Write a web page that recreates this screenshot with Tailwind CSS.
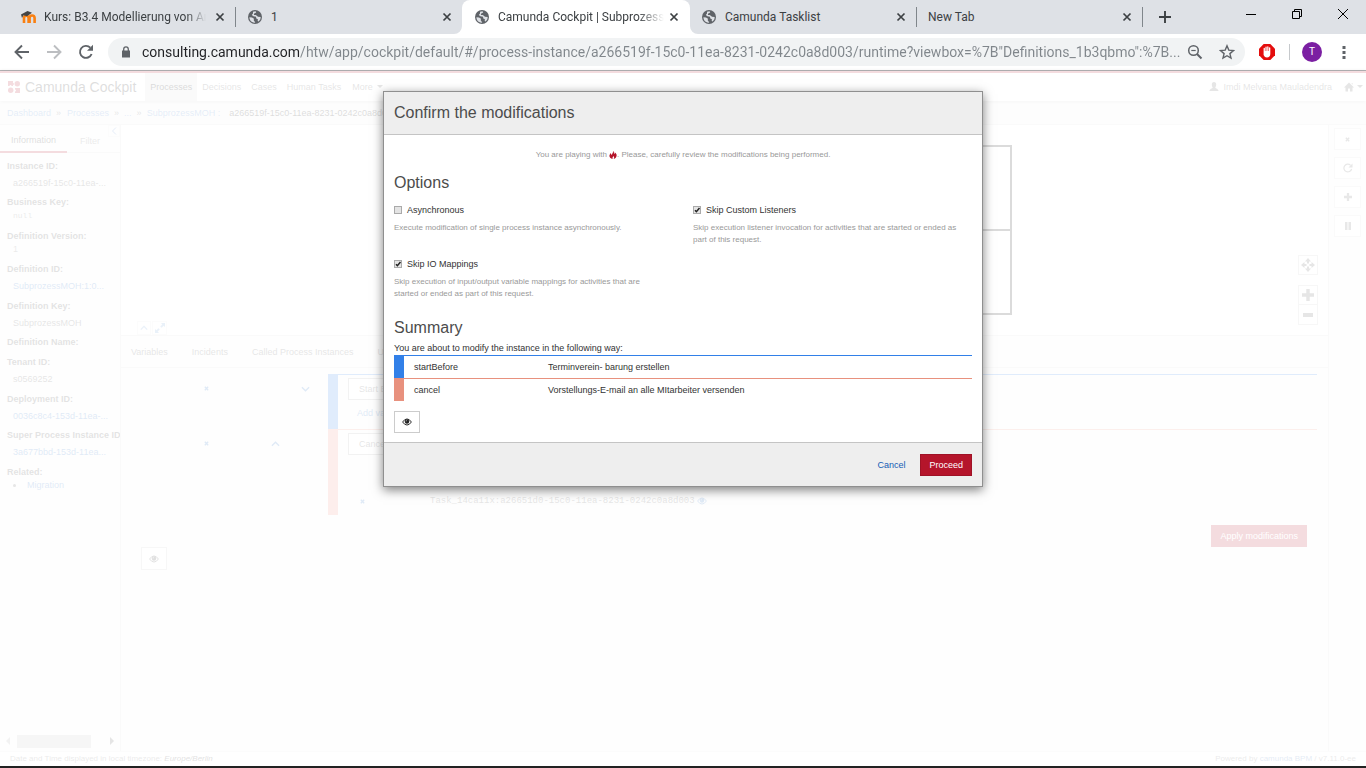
<!DOCTYPE html>
<html lang="en">
<head>
<meta charset="utf-8">
<meta name="viewport" content="width=device-width, initial-scale=1">
<title>Camunda Cockpit | Subprozess</title>
<script src="https://cdn.jsdelivr.net/npm/@tailwindcss/browser@4"></script>
</head>
<body class="flex h-screen flex-col overflow-hidden bg-white font-['Liberation_Sans',Arial,sans-serif] text-[9px] leading-[14px] text-[#333]">

<svg class="hidden" aria-hidden="true">
  <symbol id="globe" viewBox="0 0 14 14"><circle cx="7" cy="7" r="7" fill="#5f6368"/><path d="M1.4 7.2 4 7.4l2 1.4-.3 1.4 1.6 2.3-1.2.2A5.700 5.700 0 0 1 1.400 7.200ZM5 1.800 7.600 1.300l.6 1.200-2 1-.4 1.400 2 .2 2.200 1.600 2.700.300-.3 2.200-1.700 2.200-1-.3.2-1.900-1.600-.8L8 6.700 5.400 6.200 3.800 5 5 3.600Z" fill="#dee1e6"/></symbol>
  <symbol id="close" viewBox="0 0 12 12"><path d="m2.500 2.500 7 7m0-7-7 7" stroke="currentColor" stroke-width="1.700" fill="none"/></symbol>
  <symbol id="eye" viewBox="0 0 12 10"><path d="M.5 5Q3 1.200 6 1.200T11.500 5Q9 8.800 6 8.800T.5 5Z" fill="none" stroke="currentColor" stroke-width="1.200"/><circle cx="6" cy="4.400" r="2.800" fill="currentColor"/><path d="M4.900 4.200a1.200 1.200 0 0 1 1-1.200" stroke="#fff" stroke-width=".7" fill="none"/></symbol>
  <symbol id="remove" viewBox="0 0 6 6"><path d="m1 1 4 4m0-4L1 5" stroke="currentColor" stroke-width="1.600" fill="none"/></symbol>
  <symbol id="up" viewBox="0 0 10 6"><path d="m1 5 4-4 4 4" stroke="currentColor" stroke-width="1.400" fill="none"/></symbol>
  <symbol id="plus" viewBox="0 0 12 12"><path d="M4.300 0h3.400v4.300H12v3.400H7.700V12H4.300V7.700H0V4.300h4.300z" fill="currentColor"/></symbol>
</svg>

<!-- Browser window -->
<header class="shrink-0 font-[Roboto,'Noto_Sans',sans-serif]">
  <div class="flex h-[34px] bg-[#dee1e6] pl-2 text-xs text-[#3c4043]">
    <div class="flex min-w-0 flex-[0_1_227px] items-center pl-[13px] pr-[9px]">
      <svg class="mr-[7px] h-3.5 w-4 shrink-0" viewBox="0 0 16 14"><path d="M3 13V8a2.300 2.300 0 0 1 4.600 0v5M8.600 13V8a2.500 2.500 0 0 1 5 0v5" fill="none" stroke="#f98012" stroke-width="2.600"/><path d="M0 4.500 6.500 1 11 2.800 6 6.200 2.500 5.300 1 8Z" fill="#444"/></svg>
      <span class="min-w-0 flex-1 overflow-hidden whitespace-nowrap [mask-image:linear-gradient(90deg,#000_88%,transparent)]">Kurs: B3.4 Modellierung von An</span>
      <button class="ml-2 h-3 w-3 shrink-0" aria-label="Close tab"><svg class="h-3 w-3"><use href="#close"/></svg></button>
    </div>
    <div class="my-[7px] w-px shrink-0 bg-[#80868b]"></div>
    <div class="flex min-w-0 flex-[0_1_226px] items-center pl-3 pr-[9px]">
      <svg class="mr-[9px] h-3.5 w-3.5 shrink-0"><use href="#globe"/></svg>
      <span class="min-w-0 flex-1">1</span>
      <button class="ml-2 h-3 w-3 shrink-0" aria-label="Close tab"><svg class="h-3 w-3"><use href="#close"/></svg></button>
    </div>
    <div class="relative flex min-w-0 flex-[0_1_228px] items-center rounded-t-lg bg-white pl-[13px] pr-[10px]">
      <svg class="absolute bottom-0 -left-2 h-2 w-2" viewBox="0 0 8 8"><path d="M8 0v8H0a8 8 0 0 0 8-8" fill="#fff"/></svg>
      <svg class="absolute bottom-0 -right-2 h-2 w-2" viewBox="0 0 8 8"><path d="M0 0v8h8a8 8 0 0 1-8-8" fill="#fff"/></svg>
      <svg class="mr-[9px] h-3.5 w-3.5 shrink-0"><use href="#globe"/></svg>
      <span class="min-w-0 flex-1 overflow-hidden whitespace-nowrap [mask-image:linear-gradient(90deg,#000_84%,transparent)]">Camunda Cockpit | Subprozess</span>
      <button class="ml-1 h-3 w-3 shrink-0" aria-label="Close tab"><svg class="h-3 w-3"><use href="#close"/></svg></button>
    </div>
    <div class="flex min-w-0 flex-[0_1_226px] items-center pl-3 pr-[9px]">
      <svg class="mr-[9px] h-3.5 w-3.5 shrink-0"><use href="#globe"/></svg>
      <span class="min-w-0 flex-1">Camunda Tasklist</span>
      <button class="ml-2 h-3 w-3 shrink-0" aria-label="Close tab"><svg class="h-3 w-3"><use href="#close"/></svg></button>
    </div>
    <div class="my-[7px] w-px shrink-0 bg-[#80868b]"></div>
    <div class="flex min-w-0 flex-[0_1_225px] items-center pl-[11px] pr-[9px]">
      <span class="min-w-0 flex-1">New Tab</span>
      <button class="ml-2 h-3 w-3 shrink-0" aria-label="Close tab"><svg class="h-3 w-3"><use href="#close"/></svg></button>
    </div>
    <div class="my-[7px] w-px shrink-0 bg-[#80868b]"></div>
    <button class="ml-4 self-center" aria-label="New tab"><svg class="h-3 w-3" viewBox="0 0 12 12"><path d="M6 0v12M0 6h12" stroke="#3c4043" stroke-width="1.900"/></svg></button>
    <div class="ml-auto flex h-7 items-center gap-9 pr-[18px] text-black">
      <button aria-label="Minimize"><svg class="h-2.5 w-2.5" viewBox="0 0 10 10"><path d="M0 5.500h10" stroke="currentColor"/></svg></button>
      <button aria-label="Restore"><svg class="h-2.5 w-2.5" viewBox="0 0 10 10"><path d="M.5 2.500h7v7h-7zM2.500 2V.5h7v7H8" fill="none" stroke="currentColor"/></svg></button>
      <button aria-label="Close"><svg class="h-2.5 w-2.5" viewBox="0 0 10 10"><path d="m0 0 10 10M10 0 0 10" fill="none" stroke="currentColor"/></svg></button>
    </div>
  </div>
  <div class="flex h-9 items-center bg-white pr-3.5 pl-3.5 text-[#5f6368]">
    <button class="mr-4" aria-label="Back"><svg class="h-4 w-4" viewBox="0 0 16 16"><path d="M15 8H2M8 1.500 1.500 8 8 14.500" fill="none" stroke="currentColor" stroke-width="1.900"/></svg></button>
    <button class="mr-4 text-[#bcbec1]" aria-label="Forward"><svg class="h-4 w-4" viewBox="0 0 16 16"><path d="M1 8h13M8 1.500 14.500 8 8 14.500" fill="none" stroke="currentColor" stroke-width="1.900"/></svg></button>
    <button class="mr-3.5" aria-label="Reload"><svg class="h-4 w-4" viewBox="0 0 16 16"><path d="M13.600 10a6 6 0 1 1-1.300-6.300" fill="none" stroke="currentColor" stroke-width="1.900"/><path d="M15 .8v6H9z" fill="currentColor"/></svg></button>
    <div class="flex h-7 min-w-0 flex-1 items-center rounded-full bg-[#f1f3f4] pr-2.5 pl-3.5">
      <svg class="mr-3 h-3 w-2 shrink-0" viewBox="0 0 8 12"><path d="M0 4.500h8V11.500H0z" fill="currentColor"/><path d="M1.700 5V3.200a2.300 2.300 0 0 1 4.600 0V5" fill="none" stroke="currentColor" stroke-width="1.300"/></svg>
      <input aria-label="Address" readonly value='consulting.camunda.com/htw/app/cockpit/default/#/process-instance/a266519f-15c0-11ea-8231-0242c0a8d003/runtime?viewbox=%7B"Definitions_1b3qbmo":%7B...' class="min-w-0 flex-1 bg-[linear-gradient(90deg,#202124_157px,#80868b_157px)] bg-clip-text text-sm text-transparent outline-none">
      <button class="mr-4 ml-1" aria-label="Zoom"><svg class="h-4 w-4" viewBox="0 0 16 16"><circle cx="6.500" cy="6.500" r="4.800" fill="none" stroke="currentColor" stroke-width="1.500"/><path d="m10 10 4.500 4.500" stroke="currentColor" stroke-width="2"/><path d="M4.300 6.500h4.400" stroke="currentColor" stroke-width="1.200"/></svg></button>
      <button aria-label="Bookmark"><svg class="h-4 w-4" viewBox="0 0 16 16"><path d="m8 1.800 1.800 4.300 4.700.4-3.600 3.100 1.100 4.500L8 11.700l-4 2.400 1.100-4.500-3.600-3.100 4.700-.4z" fill="none" stroke="currentColor" stroke-width="1.400"/></svg></button>
    </div>
    <button class="ml-3.5" aria-label="Ad blocker"><svg class="h-4 w-4" viewBox="0 0 16 16"><path d="M4.700 0h6.600L16 4.700v6.600L11.300 16H4.700L0 11.300V4.700z" fill="#e40d0d"/><path d="M4.600 9V4.500a.65.65 0 0 1 1.300 0V7h.5V3.200a.65.65 0 0 1 1.300 0V7h.5V2.900a.65.65 0 0 1 1.300 0V7h.5V4a.65.65 0 0 1 1.300 0v6c0 2.200-1.300 3.500-3.300 3.500-1.800 0-2.500-.8-3.400-2.500z" fill="#fff"/></svg></button>
    <div class="ml-3.5 h-4 w-px bg-[#c6c9cc]"></div>
    <button class="ml-3 flex h-5 w-5 items-center justify-center rounded-full bg-[#7b1fa2] text-[10px] text-white">T</button>
    <button class="ml-3.5 flex w-4 justify-center" aria-label="Menu"><svg class="h-4 w-1" viewBox="0 0 4 16"><path d="M.5 2h3v3h-3zM.5 7h3v3h-3zM.5 12h3v3h-3z" fill="currentColor"/></svg></button>
  </div>
  <div class="h-px bg-[#b5b5b7]"></div>
</header>

<div class="relative flex min-h-0 flex-1 flex-col">
  <!-- Cockpit -->
  <nav class="z-0 flex h-[30px] shrink-0 items-center border-t-2 border-[#b5152b] bg-white pl-2 text-[#555] shadow-[0_1px_4px_#0003]">
    <a href="#" class="flex items-center gap-[5px] text-sm text-[#222]">
      <svg class="h-3 w-3 text-[#b5152b]" viewBox="0 0 12 12" fill="currentColor"><path d="M0 0h5v2a1 1 0 0 1 0 2v1H3.500a1 1 0 0 0-2 0H0zM7 7h5v5H7v-1.500a1 1 0 0 0 0-2z"/><circle cx="9.300" cy="2.700" r="2.700"/><circle cx="2.700" cy="9.300" r="2.700"/></svg>
      Camunda Cockpit</a>
    <a href="#" class="ml-[9px] flex h-full items-center bg-[#ddd] px-[5px] text-black">Processes</a>
    <a href="#" class="ml-[5px]">Decisions</a>
    <a href="#" class="ml-2.5">Cases</a>
    <a href="#" class="ml-2.5">Human Tasks</a>
    <button class="ml-[11px] flex items-center gap-1">More <svg class="h-1 w-1.5" viewBox="0 0 6 4"><path d="M0 0h6L3 3z" fill="currentColor"/></svg></button>
    <button class="ml-auto flex items-center gap-1">
      <svg class="h-2.5 w-2.5" viewBox="0 0 10 10" fill="currentColor"><path d="M5 0c1.500 0 2.200 1 2.200 2.500S6.500 5 6.300 5.600C6.500 6.700 9.500 7 9.500 9H.5c0-2 3-2.300 3.200-3.400C3.500 5 2.800 4 2.800 2.500S3.500 0 5 0"/></svg>
      Imdi Melvana Mauladendra</button>
    <button class="mr-[3px] ml-3 flex items-center gap-[3px]" aria-label="Home"><svg class="h-2.5 w-2.5" viewBox="0 0 10 10" fill="currentColor"><path d="m5 .5 5 5H8.500V9.500H6V6.500H4V9.500H1.500V5.500H0zM7.500 1h1v2z"/></svg><svg class="h-1 w-1.5" viewBox="0 0 6 4"><path d="M0 0h6L3 3z" fill="currentColor"/></svg></button>
  </nav>
  <div class="flex h-6 shrink-0 items-center gap-[5px] border-b border-[#ddd] bg-[#f4f4f4] pl-[7px] text-[#555]">
    <a href="#" class="text-[#4d86cc]">Dashboard</a><span>»</span>
    <a href="#" class="ml-px text-[#4d86cc]">Processes</a><span>»</span>
    <a href="#" class="text-[#4d86cc]">...</a><span>»</span>
    <a href="#" class="text-[#4d86cc]">SubprozessMOH :</a>
    <span class="ml-1 text-[#111]">a266519f-15c0-11ea-8231-0242c0a8d003</span>
  </div>
  <div class="flex min-h-0 flex-1 bg-[#f8f8f8]">
    <aside class="flex w-[121px] shrink-0 flex-col border-r border-[#ddd]">
      <div class="relative flex h-7 shrink-0 border-b border-[#ddd] pt-1 text-[#777]">
        <button class="-mb-px w-[67px] border-b-2 border-[#b5152b] text-[#222]">Information</button>
        <button class="w-[46px]">Filter</button>
        <button class="absolute top-0 right-0 flex h-3 w-3 items-center justify-center border border-[#eee]" aria-label="Collapse"><svg class="h-2 w-1.5" viewBox="0 0 6 8"><path d="M5 .5 1.500 4 5 7.500" fill="none" stroke="#4d86cc"/></svg></button>
      </div>
      <dl class="mt-[5px] min-h-0 flex-1 overflow-hidden pl-[7px] leading-[18px] whitespace-nowrap [&_dd]:pl-1.5 [&_dt]:leading-4 [&_dt]:font-bold [&_dt]:text-[#444]">
        <div class="h-9"><dt>Instance ID:</dt><dd class="text-[#555]">a266519f-15c0-11ea-...</dd></div>
        <div class="h-[34px]"><dt>Business Key:</dt><dd class="font-['Liberation_Mono',monospace] text-[8px] leading-3 text-[#777]">null</dd></div>
        <div class="h-[33px]"><dt>Definition Version:</dt><dd class="leading-[10px] text-[#777]">1</dd></div>
        <div class="h-[37px]"><dt>Definition ID:</dt><dd><a href="#" class="text-[#2a70c4]">SubprozessMOH:1:0...</a></dd></div>
        <div class="h-9"><dt>Definition Key:</dt><dd class="text-[#555]">SubprozessMOH</dd></div>
        <div class="h-5"><dt>Definition Name:</dt></div>
        <div class="h-[37px]"><dt>Tenant ID:</dt><dd class="text-[#555]">s0569252</dd></div>
        <div class="h-9"><dt>Deployment ID:</dt><dd><a href="#" class="text-[#2a70c4]">0036c8c4-153d-11ea-...</a></dd></div>
        <div class="h-[37px]"><dt>Super Process Instance ID:</dt><dd><a href="#" class="text-[#2a70c4]">3a677bbd-153d-11ea...</a></dd></div>
        <div><dt>Related:</dt><dd class="flex items-center gap-[11px] leading-[10px]"><span class="h-[3px] w-[3px] rounded-full bg-[#555]"></span><a href="#" class="text-[#2a70c4]">Migration</a></dd></div>
      </dl>
      <div class="flex h-5 shrink-0 items-center bg-[#f5f5f5] px-1.5">
        <svg class="h-2 w-1" viewBox="0 0 4 8"><path d="M4 0v8L0 4z" fill="#aaa"/></svg>
        <div class="ml-[7px] h-[13px] w-[74px] bg-[#c1c1c1]"></div>
        <svg class="ml-auto h-2 w-1" viewBox="0 0 4 8"><path d="M0 0v8l4-4z" fill="#505050"/></svg>
      </div>
    </aside>

    <main class="flex min-w-0 flex-1 flex-col">
      <section class="relative h-[210px] shrink-0 overflow-hidden bg-[#fcfcfc]" aria-label="Diagram">
        <svg class="absolute top-5 left-[300px] h-[170px] w-[591px]" viewBox="0 0 591 170"><path d="M1 1h589v168H1zM1 85h589" fill="none" stroke="#111" stroke-width="2"/></svg>
        <div class="absolute right-2.5 bottom-2.5 flex flex-col text-[#555]">
          <button class="mb-2.5 flex h-5 w-5 items-center justify-center border border-[#ccc] bg-white" aria-label="Reset view"><svg class="h-3.5 w-3.5" viewBox="0 0 14 14" fill="currentColor"><path d="M6 5.500V3.500H4L7 0l3 3.500H8v2zM8.500 6h2V4L14 7l-3.500 3V8h-2zM8 8.500v2h2L7 14l-3-3.500h2v-2zM5.500 8h-2v2L0 7l3.500-3v2h2z"/></svg></button>
          <button class="flex h-5 w-5 items-center justify-center border border-[#ccc] bg-white" aria-label="Zoom in"><svg class="h-3 w-3"><use href="#plus"/></svg></button>
          <button class="flex h-5 w-5 items-center justify-center border border-t-0 border-[#ccc] bg-white" aria-label="Zoom out"><svg class="h-1 w-2.5"><path d="M0 0h10v4H0z" fill="currentColor"/></svg></button>
        </div>
        <div class="absolute bottom-0 left-4 flex text-[#6f9fd8]">
          <button class="flex h-3.5 w-3.5 items-center justify-center border border-[#eee]" aria-label="Collapse diagram"><svg class="h-1.5 w-2"><use href="#up"/></svg></button>
          <button class="ml-px flex h-3.5 w-[15px] items-center justify-center border border-[#eee]" aria-label="Maximize diagram"><svg class="h-2.5 w-2.5" viewBox="0 0 10 10" fill="currentColor"><path d="M6 0h4v4L8.600 2.700 6.600 4.700 5.300 3.400l2-2zM0 6l1.400 1.300 2-2 1.300 1.300-2 2L4 10H0z"/></svg></button>
        </div>
      </section>
      <div class="flex h-[33px] shrink-0 items-center gap-6 border-y border-[#ddd] pl-2.5 text-[#555]">
        <button>Variables</button><button>Incidents</button><button>Called Process Instances</button><button>User Tasks</button>
      </div>
      <div class="mt-1.5 mr-[11px] flex h-[55px] shrink-0 text-[#2a70c4]">
        <div class="flex w-[207px] shrink-0 items-start pt-3 pl-[83px]">
          <button aria-label="Remove"><svg class="h-[5px] w-[5px]"><use href="#remove"/></svg></button>
          <button class="ml-[92px]" aria-label="Move down"><svg class="h-1.5 w-[9px] rotate-180"><use href="#up"/></svg></button>
        </div>
        <div class="w-2.5 shrink-0 bg-[#3280e8]"></div>
        <div class="min-w-0 flex-1 border-t border-[#3280e8] pt-[3px] pl-2.5">
          <select aria-label="Start instruction" class="block h-[22px] w-[110px] appearance-none border border-[#aaa] bg-white pl-2.5 text-[#555]"><option>Start Before</option></select>
          <a href="#" class="mt-1.5 block pl-[9px]">Add variable</a>
        </div>
      </div>
      <div class="mr-[11px] flex h-[86px] shrink-0 text-[#2a70c4]">
        <div class="flex w-[207px] shrink-0 items-start pt-3 pl-[83px]">
          <button aria-label="Remove"><svg class="h-[5px] w-[5px]"><use href="#remove"/></svg></button>
          <button class="ml-[62px]" aria-label="Move up"><svg class="h-1.5 w-[9px]"><use href="#up"/></svg></button>
        </div>
        <div class="w-2.5 shrink-0 bg-[#f09080]"></div>
        <div class="min-w-0 flex-1 border-t border-[#e8917e] pt-[3px] pl-2.5">
          <select aria-label="Cancel instruction" class="block h-[22px] w-[110px] appearance-none border border-[#aaa] bg-white pl-2.5 text-[#555]"><option>Cancel</option></select>
          <div class="mt-[39px] flex items-center pl-3">
            <button aria-label="Remove instance"><svg class="h-[5px] w-[5px]"><use href="#remove"/></svg></button>
            <code class="ml-[65px] font-['Liberation_Mono',monospace] text-[#555]">Task_14ca11x:a26651d0-15c0-11ea-8231-0242c0a8d003</code>
            <svg class="ml-0.5 h-2 w-2.5"><use href="#eye"/></svg>
          </div>
        </div>
      </div>
      <button class="mt-2.5 mr-[21px] h-[22px] self-end bg-[#b5152b] px-[9px] text-white">Apply modifications</button>
      <button class="ml-5 flex h-[23px] w-[26px] items-center justify-center border border-[#ccc] bg-white" aria-label="Show payload"><svg class="h-2 w-2.5"><use href="#eye"/></svg></button>
    </main>

    <div class="flex w-[38px] shrink-0 flex-col gap-[7px] border-l border-[#ddd] pt-[3px] pl-[5px] text-[#666]">
      <button class="flex h-[22px] w-[27px] items-center justify-center border border-[#ddd] bg-white" aria-label="Cancel instance"><svg class="h-[5px] w-[5px]"><use href="#remove"/></svg></button>
      <button class="flex h-[22px] w-[27px] items-center justify-center border border-[#ddd] bg-white" aria-label="Retry"><svg class="h-2.5 w-2.5" viewBox="0 0 10 10"><path d="M8.600 6a3.900 3.900 0 1 1-1-3.700" fill="none" stroke="currentColor" stroke-width="1.200"/><path d="M9.500.5v4h-4z" fill="currentColor"/></svg></button>
      <button class="flex h-[22px] w-[27px] items-center justify-center border border-[#ddd] bg-white" aria-label="Add variable"><svg class="h-2 w-2"><use href="#plus"/></svg></button>
      <button class="flex h-[22px] w-[27px] items-center justify-center border border-[#ddd] bg-white" aria-label="Suspend"><svg class="h-2 w-1.5" viewBox="0 0 6 8"><path d="M0 0h2.500v8H0zM3.500 0H6v8H3.500z" fill="currentColor"/></svg></button>
    </div>
  </div>
  <footer class="flex h-[15px] shrink-0 items-center justify-between border-t border-[#eee] bg-white px-2.5 text-[8px] text-[#777]">
    <span>Date and Time displayed in local timezone: <i class="text-[#333]">Europe/Berlin</i></span>
    <span>Powered by <a href="#" class="text-[#4a78b8]">camunda BPM</a> / v7.11.0-ee</span>
  </footer>

  <!-- Dialog -->
  <div class="absolute inset-0 flex items-start justify-center bg-white/85 pt-5">
    <div role="dialog" aria-labelledby="dialog-title" class="w-[600px] border border-[#8f8f8f] bg-white shadow-[0_3px_10px_#00000080]">
      <h1 id="dialog-title" class="flex h-[43px] items-center border-b border-[#c4c4c4] bg-[#eee] px-2.5 text-base text-[#4c4c4c]">Confirm the modifications</h1>
      <div class="px-2.5 pt-[13px] pb-[9px]">
        <p class="flex items-center justify-center text-[8px] text-[#999]">You are playing with <svg class="ml-0.5 h-2 w-2" viewBox="0 0 8 8"><path d="M4 0c1.500 1 .4 2 1.500 3C6 2.500 5.800 1.800 5.600 1.300 7.500 2.500 8 4 7.500 5.300 7 7 5.500 8 4.500 8c1-1 .8-2-.3-3C4 6 3.300 6.300 3.600 8 1.500 7.600.3 6.300.4 4.800.5 3.500 1.300 2.700 2 2c0 1 .2 1.500.8 1.900C3.200 2.500 4.300 1.700 4 0" fill="#b5152b"/></svg>. Please, carefully review the modifications being performed.</p>
        <h2 class="mt-[11px] text-base leading-5 text-[#4c4c4c]">Options</h2>
        <div class="mt-2.5 grid grid-cols-2 gap-x-5 gap-y-[11px]">
          <div>
            <label class="flex items-center gap-[5px]"><input type="checkbox" class="h-2 w-2 appearance-none border border-[#aaa] bg-[#e4e4e4]">Asynchronous</label>
            <p class="mt-[5px] text-[8px] leading-3 text-[#999]">Execute modification of single process instance asynchronously.</p>
          </div>
          <div>
            <label class="flex items-center gap-[5px]"><span class="grid"><input type="checkbox" checked class="peer col-start-1 row-start-1 h-2 w-2 appearance-none border border-[#aaa] bg-[#e4e4e4]"><svg class="pointer-events-none invisible col-start-1 row-start-1 h-2 w-2 peer-checked:visible" viewBox="0 0 8 8"><path d="m2 4.200 1.400 1.500L6.500 2" fill="none" stroke="#222" stroke-width="1.500"/></svg></span>Skip Custom Listeners</label>
            <p class="mt-[5px] text-[8px] leading-3 text-[#999]">Skip execution listener invocation for activities that are started or ended as part of this request.</p>
          </div>
          <div>
            <label class="flex items-center gap-[5px]"><span class="grid"><input type="checkbox" checked class="peer col-start-1 row-start-1 h-2 w-2 appearance-none border border-[#aaa] bg-[#e4e4e4]"><svg class="pointer-events-none invisible col-start-1 row-start-1 h-2 w-2 peer-checked:visible" viewBox="0 0 8 8"><path d="m2 4.200 1.400 1.500L6.500 2" fill="none" stroke="#222" stroke-width="1.500"/></svg></span>Skip IO Mappings</label>
            <p class="mt-[5px] max-w-[260px] text-[8px] leading-3 text-[#999]">Skip execution of input/output variable mappings for activities that are started or ended as part of this request.</p>
          </div>
        </div>
        <h2 class="mt-[18px] text-base leading-5 text-[#4c4c4c]">Summary</h2>
        <p class="mt-[3px]">You are about to modify the instance in the following way:</p>
        <table class="w-full border-separate border-spacing-0">
          <tr class="h-[23px]"><td class="w-36 border-t border-l-10 border-t-[#3280e8] border-l-[#3280e8] p-0 pl-2.5">startBefore</td><td class="border-t border-[#3280e8] p-0 pl-2.5">Terminverein- barung erstellen</td></tr>
          <tr class="h-[23px]"><td class="w-36 border-t border-l-10 border-t-[#e8917e] border-l-[#e8917e] p-0 pl-2.5">cancel</td><td class="border-t border-[#e8917e] p-0 pl-2.5">Vorstellungs-E-mail an alle MItarbeiter versenden</td></tr>
        </table>
        <button class="mt-2.5 flex h-[22px] w-[26px] items-center justify-center border border-[#ccc] bg-white text-[#222]" aria-label="Show payload"><svg class="h-2 w-2.5"><use href="#eye"/></svg></button>
      </div>
      <div class="flex h-11 items-center justify-end gap-[15px] border-t border-[#c4c4c4] bg-[#eee] px-2.5">
        <button class="text-[#155cb5]">Cancel</button>
        <button class="h-[22px] border border-[#9f1226] bg-[#b5152b] px-2 text-white">Proceed</button>
      </div>
    </div>
  </div>
</div>
<div class="h-0.5 shrink-0 bg-[#222]"></div>
</body>
</html>
